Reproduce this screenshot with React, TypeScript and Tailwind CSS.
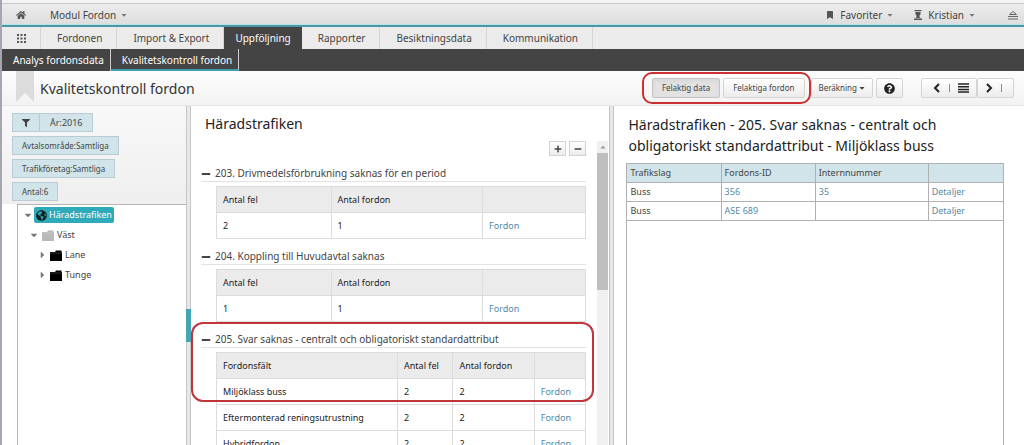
import type { ReactNode } from "react";
import { FaBookmark, FaCaretDown, FaCaretUp, FaFilter, FaGlobeAmericas, FaHome, FaMinus, FaPlus, FaQuestionCircle } from "react-icons/fa";

const TABS = ["Fordonen", "Import & Export", "Uppföljning", "Rapporter", "Besiktningsdata", "Kommunikation"];

const FILTERS = ["Avtalsområde:Samtliga", "Trafikföretag:Samtliga", "Antal:6"];

const VEHICLES = [
  { type: "Buss", id: "356", internal: "35" },
  { type: "Buss", id: "ASE 689", internal: "" },
];

export default function App() {
  return (
    <div className="flex h-screen flex-col overflow-hidden border-l-2 border-[#a5a5b4] bg-white font-['Noto_Sans','Open_Sans',sans-serif] text-[#444]">
      <TopBar />
      <MainNav />
      <SubNav />
      <TitleBar />
      <main className="grid min-h-0 flex-1 grid-cols-[184px_5px_minmax(0,419fr)_5px_minmax(0,410fr)]">
        <Sidebar />
        <Splitter handle />
        <ErrorList />
        <Splitter />
        <DetailPane />
      </main>
    </div>
  );
}

function TopBar() {
  return (
    <header className="flex h-[25px] shrink-0 items-end border-t-[3px] border-[#f4f4f4]">
      <div className="flex h-full w-full items-center border-t border-b border-t-[#c8c8c8] border-b-[#b4e4ea] bg-gradient-to-b from-[#ececec] to-[#dedede] pt-0.5 text-[10px] leading-4">
        <a href="#home" aria-label="Hem" className="ml-3.5 text-[#555]">
          <FaHome className="h-2.5 w-2.5" />
        </a>
        <button className="ml-6 flex items-center gap-1">
          Modul Fordon <FaCaretDown className="h-2 w-2 text-[#777]" />
        </button>
        <button className="ml-auto flex items-center gap-1">
          <FaBookmark className="mr-0.5 h-2 w-2 text-[#555]" /> Favoriter <FaCaretDown className="h-2 w-2 text-[#777]" />
        </button>
        <button className="ml-5 flex items-center gap-1">
          <UserIcon /> Kristian <FaCaretDown className="h-2 w-2 text-[#777]" />
        </button>
        <button aria-label="Dölj" className="mr-1.5 ml-8">
          <svg viewBox="0 0 10 10" className="h-2.5 w-2.5 fill-none stroke-[#666]">
            <path d="M1.5 4.5 5 1.5l3.500 3zM0 6.500h10M0 9h10" />
          </svg>
        </button>
      </div>
    </header>
  );
}

function UserIcon() {
  return (
    <svg viewBox="0 0 8 10" className="mr-0.5 h-2.5 w-2 fill-[#555]">
      <path d="M.5 0h7v1.300H.5zM1.500 2h5v2.500L5.500 5.500V7l1 1h-5l1-1V5.500l-1-1zM0 8.500h8V10H0z" />
    </svg>
  );
}

function MainNav() {
  return (
    <nav className="flex h-6 shrink-0 border-t-2 border-[#4a98a6] bg-[#ebebeb] text-[10px]">
      <a href="#apps" aria-label="Moduler" className="flex w-[39px] items-center justify-center border-r border-[#d6d6d6]">
        <svg viewBox="0 0 9 9" className="h-[9px] w-[9px] fill-[#555]">
          <path d="M0 0h2v2H0zM3.500 0h2v2h-2zM7 0h2v2H7zM0 3.500h2v2H0zM3.500 3.500h2v2h-2zM7 3.500h2v2H7zM0 7h2v2H0zM3.500 7h2v2h-2zM7 7h2v2H7z" />
        </svg>
      </a>
      {TABS.map((tab) => (
        <a
          key={tab}
          href="#tab"
          className={
            tab === "Uppföljning"
              ? "flex items-center bg-[#444] px-[11px] text-white"
              : "flex items-center border-r border-[#d6d6d6] pr-3.5 pl-4"
          }
        >
          {tab}
        </a>
      ))}
    </nav>
  );
}

function SubNav() {
  return (
    <nav className="flex h-[22px] shrink-0 bg-[#444] text-[10px] text-white">
      <a href="#analys" className="flex items-center border-r border-[#ccc] pr-1.5 pl-[11px]">
        Analys fordonsdata
      </a>
      <a href="#kvalitet" className="flex items-center border-r border-b-2 border-r-[#ccc] border-b-[#3f9dad] pt-0.5 pr-1.5 pl-[11px]">
        Kvalitetskontroll fordon
      </a>
    </nav>
  );
}

function TitleBar() {
  return (
    <div className="flex h-[35px] shrink-0 items-center border-b border-[#e6e6e6] bg-gradient-to-b from-[#fdfdfd] to-[#f2f2f2] pr-2.5">
      <svg viewBox="0 0 18 31" className="ml-3.5 h-[31px] w-[18px] self-start fill-[#dcdcdc]">
        <path d="M0 0h18v31l-9-9-9 9z" />
      </svg>
      <h1 className="ml-1.5 text-[14px] text-[#333]">Kvalitetskontroll fordon</h1>
      <div className="relative ml-auto flex gap-[3px]">
        <ToolButton pressed>
          <span className="px-0.5">Felaktig data</span>
        </ToolButton>
        <ToolButton>
          <span className="px-0.5">Felaktiga fordon</span>
        </ToolButton>
        <div className="pointer-events-none absolute -inset-y-1.5 -right-1.5 -left-2.5 rounded-[10px] border-2 border-[#cc3030]" />
      </div>
      <div className="ml-1.5 flex gap-[3px]">
        <ToolButton>
          Beräkning <FaCaretDown className="h-2 w-1.5" />
        </ToolButton>
        <ToolButton label="Hjälp">
          <FaQuestionCircle className="h-[11px] w-[11px] text-[#222]" />
        </ToolButton>
      </div>
      <div className="ml-[18px] flex text-[#222]">
        <ToolButton label="Föregående">
          <span className="flex items-center pl-1">
            <Chevron d="M6 1 2 5l4 4" />
            <span className="ml-2 h-2 w-px bg-[#4aa5b4]" />
            <svg viewBox="0 0 11 10" className="ml-2 h-2.5 w-[11px] stroke-[#222] stroke-[1.500]">
              <path d="M0 1h11M0 3.700h11M0 6.400h11M0 9.100h11" />
            </svg>
          </span>
        </ToolButton>
        <ToolButton label="Nästa">
          <span className="flex items-center pr-1">
            <Chevron d="m2 1 4 4-4 4" />
            <span className="ml-2 h-2 w-px bg-[#4aa5b4]" />
          </span>
        </ToolButton>
      </div>
    </div>
  );
}

function Chevron({ d }: { d: string }) {
  return (
    <svg viewBox="0 0 8 10" className="h-2.5 w-2 fill-none stroke-[#222] stroke-2">
      <path d={d} />
    </svg>
  );
}

interface ToolButtonProps {
  children: ReactNode;
  pressed?: boolean;
  label?: string;
}

function ToolButton({ children, pressed, label }: ToolButtonProps) {
  return (
    <button
      aria-label={label}
      className={
        pressed
          ? "flex h-5 items-center gap-0.5 rounded-[2px] border border-[#c4c4c4] bg-[#e2e2e2] px-[7px] text-[8px] shadow-inner"
          : "flex h-5 items-center gap-0.5 rounded-[2px] border border-[#d4d4d4] bg-gradient-to-b from-white to-[#ececec] px-[7px] text-[8px]"
      }
    >
      {children}
    </button>
  );
}

function Splitter({ handle }: { handle?: boolean }) {
  return (
    <div className="flex flex-col justify-center border-x border-[#c6c6c6] bg-[#e8e8e8]">
      {handle && <div className="-mx-px mt-[100px] h-[33px] bg-[#45a5b3]" />}
    </div>
  );
}

function Sidebar() {
  return (
    <aside className="flex flex-col bg-white">
      <div className="flex flex-col items-start gap-1 bg-gradient-to-b from-[#f8f8f8] to-[#efefef] pt-[7px] pb-[3px] pl-2.5 text-[8px]">
        <div className="flex h-[19px] items-stretch border border-[#b9ccd3] bg-[#d0e4ea] text-[9px]">
          <button aria-label="Filter" className="flex w-[27px] items-center justify-center border-r border-[#b9ccd3]">
            <FaFilter className="h-2 w-2" />
          </button>
          <button className="px-2.5">År:2016</button>
        </div>
        {FILTERS.map((filter) => (
          <button key={filter} className="h-[19px] border border-[#b9ccd3] bg-[#d0e4ea] px-[9px]">
            {filter}
          </button>
        ))}
      </div>
      <ul className="ml-[15px] flex-1 border-t border-l border-[#b5b5b5] text-[9px]">
        <li className="flex h-5 items-center pl-1.5">
          <FaCaretDown className="mr-0.5 h-2.5 w-2 text-[#777]" />
          <span className="flex h-4 items-center gap-0.5 rounded-[2px] bg-[#2faabb] px-0.5 text-white">
            <FaGlobeAmericas className="h-[11px] w-[11px] text-[#122]" />
            Häradstrafiken
          </span>
        </li>
        <TreeNode className="pl-3" folder="fill-[#b9b9b9]" open>Väst</TreeNode>
        <TreeNode className="pl-5" folder="fill-black">Lane</TreeNode>
        <TreeNode className="pl-5" folder="fill-black">Tunge</TreeNode>
      </ul>
    </aside>
  );
}

interface TreeNodeProps {
  children: ReactNode;
  className: string;
  folder: string;
  open?: boolean;
}

function TreeNode({ children, className, folder, open }: TreeNodeProps) {
  return (
    <li className={`flex h-5 items-center ${className}`}>
      <FaCaretDown className={open ? "h-2.5 w-2 text-[#777]" : "h-2.5 w-2 -rotate-90 text-[#777]"} />
      <svg viewBox="0 0 12 11" className={`mr-[3px] ml-1 h-[11px] w-3 ${folder}`}>
        <path d="M0 2h5l1-1.500h5.500V2H12v9H0z" />
        <path d="M0 3h12" className="stroke-white/40 stroke-[0.500]" />
      </svg>
      {children}
    </li>
  );
}

function ErrorList() {
  return (
    <section className="flex min-h-0 flex-col overflow-hidden pr-px pl-2.5">
      <h2 className="ml-1 pt-2 text-[14px] leading-5 text-[#222]">Häradstrafiken</h2>
      <div className="mt-[7px] flex min-h-0 flex-1">
        <div className="min-w-0 flex-1 pr-[11px]">
          <div className="flex justify-end gap-[3px]">
            <IconButton label="Visa alla">
              <FaPlus className="h-2 w-2" />
            </IconButton>
            <IconButton label="Dölj alla">
              <FaMinus className="h-2 w-2" />
            </IconButton>
          </div>
          <Group title="203. Drivmedelsförbrukning saknas för en period">
            <CountTable errors={2} vehicles={1} />
          </Group>
          <Group title="204. Koppling till Huvudavtal saknas">
            <CountTable errors={1} vehicles={1} />
          </Group>
          <div className="relative">
            <Group title="205. Svar saknas - centralt och obligatoriskt standardattribut">
              <FieldTable fields={["Miljöklass buss", "Eftermonterad reningsutrustning", "Hybridfordon"]} />
            </Group>
            <div className="pointer-events-none absolute top-0 -right-2 -left-2.5 h-20 rounded-xl border-2 border-[#c0343c]" />
          </div>
        </div>
        <div className="flex w-[11px] flex-col bg-[#f0f0f0]">
          <FaCaretUp className="mx-auto my-0.5 h-2 w-2 text-[#999]" />
          <div className="h-[137px] bg-[#bfbfbf]" />
        </div>
      </div>
    </section>
  );
}

function IconButton({ children, label }: { children: ReactNode; label: string }) {
  return (
    <button
      aria-label={label}
      className="flex h-[15px] w-[17px] items-center justify-center border border-[#d4d4d4] bg-gradient-to-b from-white to-[#ececec]"
    >
      {children}
    </button>
  );
}

function Group({ title, children }: { title: string; children: ReactNode }) {
  return (
    <div className="pt-2.5">
      <h3 className="flex h-4 items-center gap-1 border-b border-[#e2e2e2] text-[10px]">
        <FaMinus className="h-2.5 w-2.5" />
        {title}
      </h3>
      <div className="mt-1 ml-[15px]">{children}</div>
    </div>
  );
}

const cell = "h-[26px] border border-[#dcdcdc] px-1.5 text-left font-normal";

function CountTable({ errors, vehicles }: { errors: number; vehicles: number }) {
  return (
    <table className="w-full table-fixed border-collapse text-[9px] text-[#222]">
      <thead className="bg-[#ebebeb]">
        <tr>
          <th className={`${cell} w-[31%]`}>Antal fel</th>
          <th className={`${cell} w-[41%]`}>Antal fordon</th>
          <th className={cell} />
        </tr>
      </thead>
      <tbody>
        <tr>
          <td className={cell}>{errors}</td>
          <td className={cell}>{vehicles}</td>
          <td className={cell}>
            <a href="#fordon" className="text-[#4f8ba8]">Fordon</a>
          </td>
        </tr>
      </tbody>
    </table>
  );
}

function FieldTable({ fields }: { fields: string[] }) {
  return (
    <table className="w-full table-fixed border-collapse text-[9px] text-[#222]">
      <thead className="bg-[#ebebeb]">
        <tr>
          <th className={`${cell} w-[49%]`}>Fordonsfält</th>
          <th className={`${cell} w-[15%]`}>Antal fel</th>
          <th className={`${cell} w-[22%]`}>Antal fordon</th>
          <th className={cell} />
        </tr>
      </thead>
      <tbody>
        {fields.map((field) => (
          <tr key={field}>
            <td className={cell}>{field}</td>
            <td className={cell}>2</td>
            <td className={cell}>2</td>
            <td className={cell}>
              <a href="#fordon" className="text-[#4f8ba8]">Fordon</a>
            </td>
          </tr>
        ))}
      </tbody>
    </table>
  );
}

const gridCell = "h-[19px] border border-[#b0b0b0] px-[3px] text-left font-normal";

function DetailPane() {
  return (
    <section className="flex min-h-0 flex-col pr-5 pl-3">
      <h2 className="ml-0.5 pt-2 text-[14px] leading-[21px] text-[#222]">
        Häradstrafiken - 205. Svar saknas - centralt och obligatoriskt standardattribut - Miljöklass buss
      </h2>
      <div className="mt-[7px] flex-1 border-x border-[#b0b0b0]">
        <table className="-mx-px w-[calc(100%+2px)] table-fixed border-collapse text-[9px]">
          <thead className="bg-[#d0e4ea]">
            <tr>
              <th className={`${gridCell} w-1/4`}>Trafikslag</th>
              <th className={`${gridCell} w-1/4`}>Fordons-ID</th>
              <th className={`${gridCell} w-[30%]`}>Internnummer</th>
              <th className={gridCell} />
            </tr>
          </thead>
          <tbody>
            {VEHICLES.map((v) => (
              <tr key={v.id}>
                <td className={gridCell}>{v.type}</td>
                <td className={`${gridCell} text-[#4f8ba8]`}>{v.id}</td>
                <td className={`${gridCell} text-[#4f8ba8]`}>{v.internal}</td>
                <td className={gridCell}>
                  <a href="#detaljer" className="text-[#4f8ba8]">Detaljer</a>
                </td>
              </tr>
            ))}
          </tbody>
        </table>
      </div>
    </section>
  );
}
